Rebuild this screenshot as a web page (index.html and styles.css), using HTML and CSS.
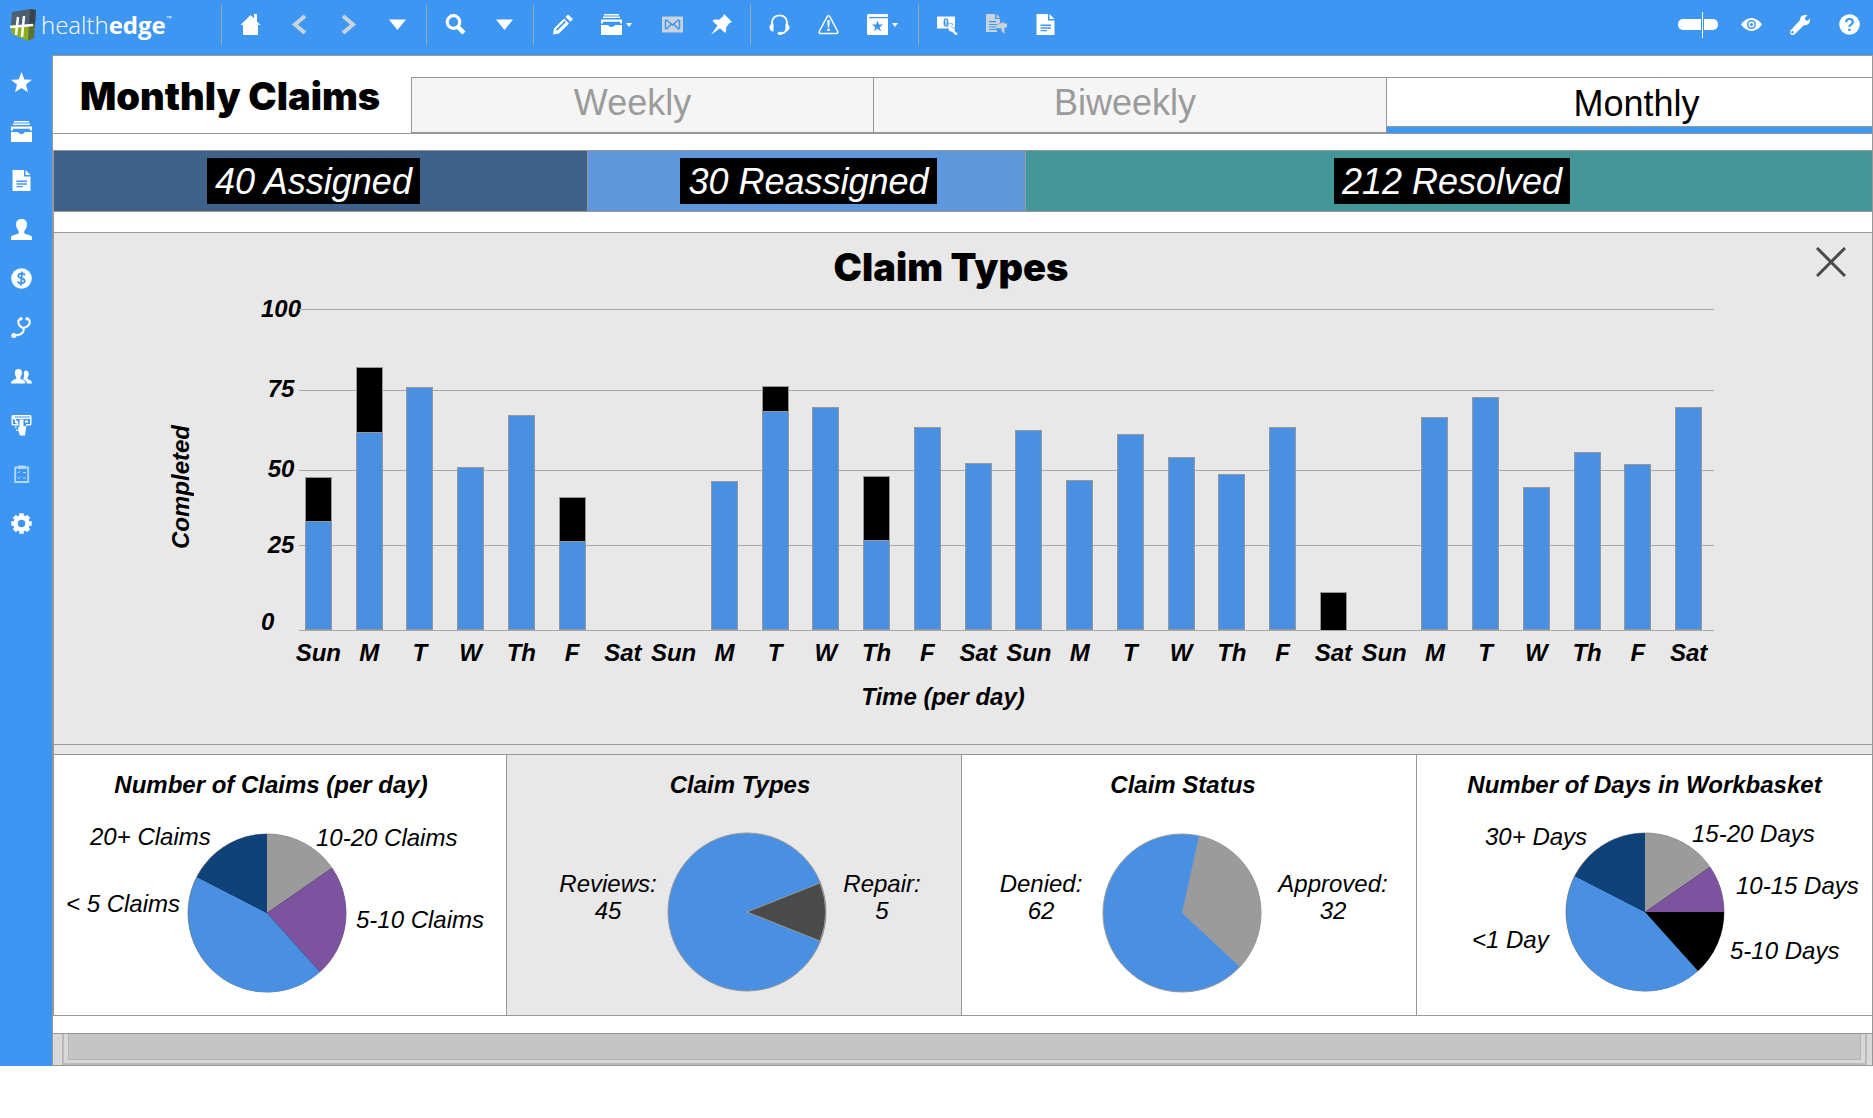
FILE: index.html
```html
<!DOCTYPE html>
<html lang="en">
<head>
    <meta charset="UTF-8">
    <meta name="viewport" content="width=device-width, initial-scale=1.0">
    <title>Monthly Claims</title>
    <link rel="stylesheet" href="styles.css">
</head>
<body>
    <!-- icons used in the toolbar and the sidebar -->
    <svg class="sprite" aria-hidden="true">
        <symbol id="home" viewBox="0 0 21 21"><path d="M10.500 1 14 4.500V0h3v7.500l3.500 3.500H18v10H3V11H.5z"/></symbol>
        <symbol id="left" viewBox="0 0 21 21"><path d="M16 2 6 10.500 16 19" fill="none" stroke="currentColor" stroke-width="4"/></symbol>
        <symbol id="right" viewBox="0 0 21 21"><path d="M5 2 15 10.500 5 19" fill="none" stroke="currentColor" stroke-width="4"/></symbol>
        <symbol id="down" viewBox="0 0 21 21"><path d="M2 5.500h17L10.500 16z"/></symbol>
        <symbol id="search" viewBox="0 0 21 21"><circle cx="8.500" cy="8" r="6.300" fill="none" stroke="currentColor" stroke-width="3.200"/><path d="m13 13 6 6" stroke="currentColor" stroke-width="4.500"/></symbol>
        <symbol id="pencil" viewBox="0 0 21 21"><path fill-rule="evenodd" d="M1 20.500 2 14.500 12 4.500l5 5-10 10zM12.500 7 4 15.500l1.200 1.200L14 8z"/><path d="m13.500 3 2.500-2.500 5 4.500-2.700 2.800z"/></symbol>
        <symbol id="tray" viewBox="0 0 21 21"><path d="M3 0h15v1.500H3zM2 2.500h17V4H2zM0 5.500h21v4h-2V7.800H2v1.700H0zM0 11h6.500c1 0 1.500 2 4 2s3-2 4-2H21v10H0z"/></symbol>
        <symbol id="mail" viewBox="0 0 21 21"><path d="M0 2.500h21v16H0z"/><path d="m4 5.500 6.500 5.500L17 5.500M4 15.500l5-5m8 5-5-5M3.500 6v9M17.500 6v9" fill="none" stroke="#3d96f2" stroke-width="1.500"/></symbol>
        <symbol id="pin" viewBox="0 0 21 21"><path d="m13 0 8 8-2.500 1-3.500 4.500c.5 2.500.2 4-1 5.500l-5-4.800L0 21l6.500-9.500L1.500 7C3 5.500 5 5.200 7.500 6L12 2.500z"/></symbol>
        <symbol id="headset" viewBox="0 0 21 21"><path d="M3 11V8.500C3 4.500 6 1.300 10.500 1.300S18 4.500 18 8.500V12q0 7-6 7.500" fill="none" stroke="currentColor" stroke-width="1.800"/><path d="M4.500 9.500v8C2 17.500.5 15.500.5 13.500s1.500-4 4-4zm12 0c2.500 0 4 2 4 4s-1.500 4-4 4z"/><ellipse cx="11" cy="19.300" rx="2.500" ry="1.600"/></symbol>
        <symbol id="alert" viewBox="0 0 21 21"><path d="M10.500 1.800Q11.500 1.800 12.500 3.800L19.500 17q1.200 2.500-1.200 2.500H2.700Q.3 19.500 1.500 17L8.500 3.800q1-2 2-2z" fill="none" stroke="currentColor" stroke-width="1.500"/><path d="M9.200 6h2.600l-.6 7.500H9.800zM9.300 14.700h2.400V17H9.300z"/></symbol>
        <symbol id="book" viewBox="0 0 21 21"><path fill-rule="evenodd" d="M1.500 0H21v3H2v1.200h19V21H1.500Q0 21 0 19.500V1.500Q0 0 1.500 0zm9 6.500L9 10.500H5l3.300 2.700L7 17.300l3.500-2.500 3.500 2.500-1.300-4.100L16 10.500h-4z"/></symbol>
        <symbol id="money" viewBox="0 0 21 21"><path d="M0 2.500h18v12H0z"/><ellipse cx="9" cy="8.500" rx="2.500" ry="4.300" fill="#3d96f2"/><path d="M9 5.500v6M8 7h2" stroke="currentColor"/><path d="M11 10.500q2-2.500 5-.500l-1.500 2.500 1 1.500 2.500-.5q.3 2-.500 2.800l3.500 3.500-2 2-3.700-3.900q-4.300.2-4.300-4.400z" stroke="#3d96f2" stroke-width=".600"/></symbol>
        <symbol id="docout" viewBox="0 0 21 21"><path fill-rule="evenodd" d="M0 0h9v5h5v4l-2 1H3v1h8v1.500H3v1h7V15H3v1h8v2H0zM3 7v1.200h7V7z"/><path d="M10.500 0 14 4h-3.500zM10 11l8-3v1.500h3v4h-2.500V20l-3-3v-2.500L10 14z"/></symbol>
        <symbol id="doc" viewBox="0 0 21 21"><path fill-rule="evenodd" d="M1.500 0H13v6.500h6.500V21h-18zM5.500 10.500V12h10.500v-1.500zm0 2.700v1.500h10.500v-1.500zm0 2.800v1.300H12V16z"/><path d="M14.500 0v5h5z"/></symbol>
        <symbol id="eye" viewBox="0 0 21 21"><path fill-rule="evenodd" d="M0 10.500Q4.500 4 10.500 4T21 10.500Q16.500 17 10.500 17T0 10.500zm10.500-4.500a4.500 4.500 0 1 0 0 9 4.500 4.500 0 0 0 0-9z"/><circle cx="10.500" cy="10.500" r="2.300" fill="none" stroke="currentColor" stroke-width="1.400"/></symbol>
        <symbol id="wrench" viewBox="0 0 21 21"><path fill-rule="evenodd" d="M10 6Q10 1 16 .8l1.500.4L14.800 4l.7 2.200 2.200.6L20 4.200q1 7-6.500 7.300L5 20q-2.500 1.800-4 .5T.5 16.500zM3 17.200a1.200 1.200 0 1 0 0 2 1.200 1.200 0 0 0 0-2z"/></symbol>
        <symbol id="help" viewBox="0 0 21 21"><circle cx="10.500" cy="10.500" r="10.300"/><path d="M7.200 8.200Q7.200 5 10.500 5t3.300 3q0 1.500-1.800 2.600T10.500 13" fill="none" stroke="#3d96f2" stroke-width="2.200"/><circle cx="10.500" cy="15.800" r="1.400" fill="#3d96f2"/></symbol>
        <symbol id="star" viewBox="0 0 21 21"><path d="m10.500 0 2.900 7.400 7.600.4-6 4.800 2 7.600-6.500-4.200L4 20.200l2-7.600-6-4.800 7.600-.4z"/></symbol>
        <symbol id="user" viewBox="0 0 21 21"><path d="M10.500 0C14 0 16 2 16 5.500q0 4-2.700 6.500v2.500l6 2q1.700.7 1.700 2V21H0v-2.500q0-1.300 1.700-2l6-2V12Q5 9.500 5 5.500 5 0 10.500 0z"/></symbol>
        <symbol id="dollar" viewBox="0 0 21 21"><circle cx="10.500" cy="10.500" r="10.300"/><path d="M14 7.200Q13.300 5.500 10.500 5.500T7.300 7.800q0 1.800 3.200 2.500t3.200 2.700-3.200 2.300-3.600-2M11.200 3.500 9.800 17.500" fill="none" stroke="#3d96f2" stroke-width="1.800"/></symbol>
        <symbol id="steth" viewBox="0 0 21 21"><path d="M9.500 2Q6 3 8 7.500q1.500 3 4.500 3.500 4.500-1 6-4.500Q19.500 3 16.500 1.800M12.500 11q1.500 7-9.500 7.500" fill="none" stroke="currentColor" stroke-width="2"/><circle cx="2.800" cy="18.500" r="2.500"/><circle cx="10" cy="1.800" r="1.700"/><circle cx="16" cy="1.800" r="1.700"/></symbol>
        <symbol id="users" viewBox="0 0 21 21"><path d="M14.800 4.500q3 .2 3 3.500 0 2.500-1.500 4 0 1.500 2.700 2.200 2 .6 2 3.300h-5q0-2.500-2.500-3.500L12.200 13q1.600-3 .6-6.500.500-2 2-2z"/><path d="M7.500 3Q11 3 11 7q0 2.500-1.700 4.500v1.200l3.500 1.600q1.700.8 1.700 3.200H0q0-2.400 1.700-3.200l3.600-1.500v-1.300Q3.800 9.500 3.800 7q0-4 3.700-4z"/></symbol>
        <symbol id="claim" viewBox="0 0 21 21"><path d="M2 .8h17q.8 0 .8.800V9q0 .8-.8.800h-4M7 9.800H2q-.8 0-.8-.8V1.600Q1.200.8 2 .8zM1 3.300h19" fill="none" stroke="currentColor" stroke-width="1.400"/><path d="M4 6h3v2H4zm10-.500h3v2h-3zM8.500 4.500h4v7l3-1-1 6-.5 4H9l-1.500-4-.5-4 1.500-1zM4 11.500h1.500V13H4zm1 3h1.500V16H5z"/></symbol>
        <symbol id="list" viewBox="0 0 21 21"><path d="M4.200 3.500h13v14.500h-13z" fill="none" stroke="currentColor" stroke-width="1.800"/><path d="M7 1.500h7.500V5H7z"/><path d="m6.500 8 1 1 1.500-2m3 1.500h3m-8.500 5 1 1L9 12.500m3 1.500h3" fill="none" stroke="currentColor"/></symbol>
        <symbol id="gear" viewBox="0 0 21 21"><circle cx="10.500" cy="10.500" r="6" fill="none" stroke="currentColor" stroke-width="4.500"/><path d="M10.500.3v20.400M.3 10.500h20.400M3.300 3.300l14.400 14.400M17.700 3.300 3.300 17.700" fill="none" stroke="currentColor" stroke-width="4.500" stroke-dasharray="3 14.400"/></symbol>
    </svg>

    <header class="topbar">
        <a class="brand" href="#">
            <svg class="logo" viewBox="0 0 26 32" aria-hidden="true">
                <path d="M2 3 20 0l6 1-1 14-24 1z" fill="#4d5f70"/>
                <path d="M20 0 26 1 25 15h-6z" fill="#38444f"/>
                <path d="M1 16h18l-1 16L2 25z" fill="#8fae1b"/>
                <path d="M19 15h6l-1 14-6 3z" fill="#5d7230"/>
                <path d="M8 8 6 26M14 7l-2 21M0 18l23-2" fill="none" stroke="#fff" stroke-width="2.500"/>
            </svg>
            <span class="name">health<b>edge</b></span><small>™</small>
        </a>
        <span class="sep"></span>
        <button class="icon" aria-label="Home"><svg><use href="#home"/></svg></button>
        <button class="icon muted" aria-label="Back"><svg><use href="#left"/></svg></button>
        <button class="icon muted" aria-label="Forward"><svg><use href="#right"/></svg></button>
        <button class="icon" aria-label="History"><svg><use href="#down"/></svg></button>
        <span class="sep"></span>
        <button class="icon" aria-label="Search"><svg><use href="#search"/></svg></button>
        <button class="icon" aria-label="Search options"><svg><use href="#down"/></svg></button>
        <span class="sep"></span>
        <button class="icon" aria-label="Edit"><svg><use href="#pencil"/></svg></button>
        <button class="icon with-caret" aria-label="Workbasket"><svg><use href="#tray"/></svg><i class="caret"></i></button>
        <button class="icon muted" aria-label="Mail"><svg><use href="#mail"/></svg></button>
        <button class="icon" aria-label="Pin"><svg><use href="#pin"/></svg></button>
        <span class="sep"></span>
        <button class="icon" aria-label="Support"><svg><use href="#headset"/></svg></button>
        <button class="icon" aria-label="Alerts"><svg><use href="#alert"/></svg></button>
        <button class="icon with-caret" aria-label="Bookmarks"><svg><use href="#book"/></svg><i class="caret"></i></button>
        <span class="sep"></span>
        <button class="icon" aria-label="Payment repair"><svg><use href="#money"/></svg></button>
        <button class="icon muted" aria-label="Send document"><svg><use href="#docout"/></svg></button>
        <button class="icon" aria-label="Document"><svg><use href="#doc"/></svg></button>
        <div class="right-tools">
            <input type="range" class="zoom" aria-label="Zoom" min="0" max="100" value="62">
            <button class="icon" aria-label="View"><svg><use href="#eye"/></svg></button>
            <button class="icon" aria-label="Tools"><svg><use href="#wrench"/></svg></button>
            <button class="icon" aria-label="Help"><svg><use href="#help"/></svg></button>
        </div>
    </header>

    <div class="wrapper">
        <nav class="sidebar">
            <button class="icon" aria-label="Favorites"><svg><use href="#star"/></svg></button>
            <button class="icon" aria-label="Workbasket"><svg><use href="#tray"/></svg></button>
            <button class="icon" aria-label="Documents"><svg><use href="#doc"/></svg></button>
            <button class="icon" aria-label="Member"><svg><use href="#user"/></svg></button>
            <button class="icon" aria-label="Billing"><svg><use href="#dollar"/></svg></button>
            <button class="icon" aria-label="Providers"><svg><use href="#steth"/></svg></button>
            <button class="icon" aria-label="Groups"><svg><use href="#users"/></svg></button>
            <button class="icon" aria-label="Claims"><svg><use href="#claim"/></svg></button>
            <button class="icon soft" aria-label="Tasks"><svg><use href="#list"/></svg></button>
            <button class="icon" aria-label="Settings"><svg><use href="#gear"/></svg></button>
        </nav>

        <main>
            <div class="heading">
                <h1>Monthly Claims</h1>
                <div class="tabs" role="tablist">
                    <button class="tab weekly" role="tab">Weekly</button>
                    <button class="tab biweekly" role="tab">Biweekly</button>
                    <button class="tab monthly active" role="tab" aria-selected="true">Monthly</button>
                </div>
            </div>

            <div class="content">
                <div class="status">
                    <div class="assigned"><span>40 Assigned</span></div>
                    <div class="reassigned"><span>30 Reassigned</span></div>
                    <div class="resolved"><span>212 Resolved</span></div>
                </div>

                <section class="panel">
                    <div class="panel-title">
                        <h2>Claim Types</h2>
                        <button class="close" aria-label="Close">
                            <svg viewBox="0 0 30 30"><path d="M1 1 29 29M29 1 1 29"/></svg>
                        </button>
                    </div>
                    <div class="chart">
                        <p class="y-title">Completed</p>
                        <ul class="y-axis">
                            <li>100</li>
                            <li>75</li>
                            <li>50</li>
                            <li>25</li>
                            <li>0</li>
                        </ul>
                        <div class="plot">
                            <div class="lines"><div></div><div></div><div></div><div></div></div>
                            <div class="bars" id="bars"></div>
                            <div class="days" id="days"></div>
                        </div>
                    </div>
                    <p class="x-title">Time (per day)</p>
                </section>

                <section class="cards">
                    <article class="card per-day">
                        <h3>Number of Claims (per day)</h3>
                        <svg class="pie" viewBox="0 0 452 180">
                            <g transform="translate(213 93)">
                                <circle r="79" class="ring"/>
                                <path class="gray" d="M0 0V-79A79 79 0 0 1 65-45z"/>
                                <path class="purple" d="M0 0 65-45A79 79 0 0 1 53 59z"/>
                                <path class="blue" d="M0 0 53 59A79 79 0 0 1-70-36z"/>
                                <path class="navy" d="M0 0-70-36A79 79 0 0 1 0-79z"/>
                            </g>
                            <text x="36" y="25">20+ Claims</text>
                            <text x="262" y="26">10-20 Claims</text>
                            <text x="12" y="92">&lt; 5 Claims</text>
                            <text x="302" y="108">5-10 Claims</text>
                        </svg>
                    </article>
                    <article class="card types">
                        <h3>Claim Types</h3>
                        <svg class="pie" viewBox="0 0 452 180">
                            <g transform="translate(239 92)">
                                <circle r="79" class="ring blue"/>
                                <path class="dark" d="M0 0 73-29A79 79 0 0 1 73 29z"/>
                            </g>
                            <g text-anchor="middle">
                                <text x="100" y="72">Reviews:</text>
                                <text x="100" y="99">45</text>
                                <text x="374" y="72">Repair:</text>
                                <text x="374" y="99">5</text>
                            </g>
                        </svg>
                    </article>
                    <article class="card claim-status">
                        <h3>Claim Status</h3>
                        <svg class="pie" viewBox="0 0 452 180">
                            <g transform="translate(219 93)">
                                <circle r="79" class="ring blue"/>
                                <path class="gray" d="M0 0 17-77A79 79 0 0 1 58 54z"/>
                            </g>
                            <g text-anchor="middle">
                                <text x="78" y="72">Denied:</text>
                                <text x="78" y="99">62</text>
                                <text x="370" y="72">Approved:</text>
                                <text x="370" y="99">32</text>
                            </g>
                        </svg>
                    </article>
                    <article class="card">
                        <h3>Number of Days in Workbasket</h3>
                        <svg class="pie" viewBox="0 0 452 180">
                            <g transform="translate(226 92)">
                                <circle r="79" class="ring"/>
                                <path class="gray" d="M0 0V-79A79 79 0 0 1 65-45z"/>
                                <path class="purple" d="M0 0 65-45A79 79 0 0 1 79 0z"/>
                                <path class="black" d="M0 0H79A79 79 0 0 1 53 59z"/>
                                <path class="blue" d="M0 0 53 59A79 79 0 0 1-70-36z"/>
                                <path class="navy" d="M0 0-70-36A79 79 0 0 1 0-79z"/>
                            </g>
                            <text x="66" y="25">30+ Days</text>
                            <text x="273" y="22">15-20 Days</text>
                            <text x="317" y="74">10-15 Days</text>
                            <text x="53" y="128">&lt;1 Day</text>
                            <text x="311" y="139">5-10 Days</text>
                        </svg>
                    </article>
                </section>
            </div>

            <div class="scroll">
                <div class="track"><div class="thumb"></div></div>
            </div>
        </main>
    </div>

    <script>
        // [day, reviews, repairs] as bar heights in px
        const claims = [
            ['Sun', 109, 44], ['M', 198, 65], ['T', 243, 0], ['W', 163, 0], ['Th', 215, 0], ['F', 89, 44], ['Sat', 0, 0],
            ['Sun', 0, 0], ['M', 149, 0], ['T', 219, 25], ['W', 223, 0], ['Th', 90, 64], ['F', 203, 0], ['Sat', 167, 0],
            ['Sun', 200, 0], ['M', 150, 0], ['T', 196, 0], ['W', 173, 0], ['Th', 156, 0], ['F', 203, 0], ['Sat', 0, 38],
            ['Sun', 0, 0], ['M', 213, 0], ['T', 233, 0], ['W', 143, 0], ['Th', 178, 0], ['F', 166, 0], ['Sat', 223, 0]
        ];
        const bars = document.getElementById('bars');
        const days = document.getElementById('days');

        function addSegment(column, name, height){
            if(height === 0) return;
            const segment = document.createElement('div');
            segment.className = name;
            segment.style.height = height + 'px';
            column.appendChild(segment);
        }

        claims.forEach(([day, reviews, repairs]) => {
            const column = document.createElement('div');
            column.className = 'bar';
            addSegment(column, 'repairs', repairs);
            addSegment(column, 'reviews', reviews);
            bars.appendChild(column);

            const label = document.createElement('span');
            label.textContent = day;
            days.appendChild(label);
        });
    </script>
</body>
</html>
```
FILE: styles.css
```css
*,
*::before,
*::after{
    padding: 0;
    margin: 0;
    box-sizing: border-box;
}
body{
    background-color: #ffffff;
    color: #000000;
    font-family: "Liberation Sans", Arial, sans-serif;
    font-size: 24px;
}
button{
    border: none;
    background: none;
    font-family: inherit;
    cursor: pointer;
}
.sprite{
    display: none;
}

/* top bar */
.topbar{
    display: flex;
    align-items: center;
    height: 55px;
    padding-bottom: 6px;
    background-color: #3d96f2;
    color: #ffffff;
}
.brand{
    display: flex;
    align-items: center;
    width: 217px;
    padding-left: 10px;
    color: #ffffff;
    text-decoration: none;
}
.logo{
    width: 26px;
    height: 32px;
    margin-right: 5px;
}
.name{
    font-family: "Open Sans", sans-serif;
    font-size: 24px;
    font-weight: 300;
    line-height: 32px;
}
.name b{
    font-weight: 700;
}
.brand small{
    align-self: flex-start;
    padding-top: 6px;
    font-size: 6px;
}
.sep{
    width: 1px;
    height: 41px;
    margin: 0 4px;
    background-color: #9aa5ad;
}
.icon{
    display: flex;
    align-items: center;
    justify-content: center;
    width: 49px;
    height: 49px;
    color: #ffffff;
}
.icon svg{
    width: 21px;
    height: 21px;
    fill: currentColor;
}
.icon.muted{
    color: #c8d3dc;
}
.icon.soft{
    color: #b5d8f8;
}
.icon.with-caret{
    justify-content: flex-start;
    gap: 4px;
    width: 61px;
    padding-left: 14px;
}
.caret{
    border: 3px solid transparent;
    border-top: 4px solid #ffffff;
    border-bottom: none;
}
.right-tools{
    display: flex;
    align-items: center;
    margin-left: auto;
}
.right-tools .icon:last-child{
    width: 48px;
}
.zoom{
    appearance: none;
    width: 40px;
    height: 26px;
    margin-right: 9px;
    background: none;
}
.zoom::-webkit-slider-runnable-track{
    height: 11px;
    border-radius: 5px;
    background-color: #ffffff;
}
.zoom::-webkit-slider-thumb{
    appearance: none;
    width: 3px;
    height: 26px;
    margin-top: -7px;
    border: solid #3d96f2;
    border-width: 0 1px;
    background-color: #ffffff;
}

/* layout */
.wrapper{
    display: flex;
}
.sidebar{
    width: 52px;
    padding-top: 3px;
    background-color: #3d96f2;
}
.sidebar .icon{
    width: 42px;
}
main{
    flex: 1;
    min-width: 0;
    border: 1px solid #979797;
}
.heading{
    display: flex;
    height: 78px;
    border-bottom: 1px solid #979797;
}
h1,
h2{
    font-family: "Arial Black", Inter, sans-serif;
    font-size: 38px;
    font-weight: 900;
    line-height: 44px;
}
h1{
    width: 358px;
    padding: 18px 0 0 27px;
    white-space: nowrap;
}
.tabs{
    display: grid;
    flex: 1;
    grid-template-columns: 462fr 513fr 486fr;
    margin-top: 21px;
}
.tab{
    padding-bottom: 4px;
    border: 1px solid #979797;
    border-right: none;
    background-color: #f5f5f5;
    color: #9b9b9b;
    font-size: 36px;
    line-height: 48px;
}
.weekly{
    padding-right: 20px;
}
.biweekly{
    padding-right: 10px;
}
.monthly{
    padding-left: 14px;
}
.tab.active{
    border-bottom: none;
    background-color: #ffffff;
    color: #000000;
    box-shadow: inset 0 -6px #3d96f2, inset 0 -7px #979797;
}
.content{
    border-left: 1px solid #979797;
}

/* status bar */
.status{
    display: grid;
    grid-template-columns: 533fr 438fr 847fr;
    margin: 16px 0 20px;
    border-top: 1px solid #979797;
    border-bottom: 1px solid #979797;
}
.status div{
    display: flex;
    justify-content: center;
    padding: 7px 0;
}
.status div + div{
    border-left: 1px solid #979797;
}
.status span{
    padding: 2px 8px 0;
    background-color: #000000;
    color: #ffffff;
    font-size: 36px;
    font-style: italic;
    line-height: 44px;
}
.status .assigned{
    padding-right: 14px;
    background-color: #3f628b;
}
.status .reassigned{
    padding-left: 4px;
    background-color: #5e97dc;
}
.status .resolved{
    padding-left: 6px;
    background-color: #449798;
}

/* claim types chart */
.panel{
    padding: 12px 26px 33px 32px;
    border-top: 1px solid #979797;
    border-bottom: 1px solid #979797;
    background-color: #e8e8e8;
}
.panel-title{
    display: flex;
    align-items: flex-start;
}
h2{
    flex: 1;
    text-align: center;
}
.close{
    width: 30px;
    height: 30px;
    margin-top: 2px;
}
.close svg{
    display: block;
    fill: none;
    stroke: #4a4a4a;
    stroke-width: 3px;
}
.chart,
.x-title{
    font-weight: bold;
    font-style: italic;
    line-height: 28px;
}
.chart{
    display: flex;
    align-items: flex-start;
    margin: 6px 132px 0 81px;
}
.y-title{
    align-self: center;
    margin-top: 12px;
    writing-mode: vertical-rl;
    transform: rotate(180deg);
}
.y-axis{
    display: grid;
    grid-template-rows: 80px 80px 76px 77px 28px;
    width: 27px;
    margin: 0 5px 0 66px;
    list-style: none;
}
.y-axis li{
    display: flex;
    justify-content: center;
}
.y-axis li:last-child{
    justify-content: flex-start;
}
.plot{
    position: relative;
    flex: 1;
    padding-top: 14px;
}
.lines{
    position: absolute;
    top: 14px;
    left: 6px;
    right: 0;
    display: grid;
    grid-template-rows: 81px 80px 75px 86px;
}
.lines div{
    border-top: 1px solid #a8a8a8;
}
.lines div:last-child{
    border-bottom: 1px solid #a8a8a8;
}
.bars,
.days{
    position: relative;
    display: grid;
    grid-template-columns: repeat(28, 1fr);
}
.bars{
    height: 322px;
    padding-bottom: 1px;
}
.bar{
    display: flex;
    flex-direction: column;
    justify-content: flex-end;
    align-items: center;
}
.bar div{
    width: 27px;
    border: 1px solid #979797;
}
.reviews{
    background-color: #4a90e2;
}
.bar .repairs{
    border-bottom: none;
    background-color: #000000;
}
.days{
    margin-top: 8px;
}
.days span{
    display: flex;
    justify-content: center;
}
.x-title{
    padding-right: 46px;
    margin-top: 16px;
    text-align: center;
}

/* pie charts */
.cards{
    display: grid;
    grid-template-columns: 453fr 455fr 455fr 455fr;
    border-top: 9px solid #e8e8e8;
    border-bottom: 1px solid #979797;
}
.card{
    padding: 16px 0 15px;
    border-top: 1px solid #979797;
    border-right: 1px solid #979797;
}
.card:last-child{
    border-right: none;
}
.card.types{
    background-color: #e8e8e8;
}
h3{
    margin-bottom: 21px;
    font-size: 24px;
    font-style: italic;
    line-height: 28px;
    text-align: center;
}
.per-day h3{
    padding-right: 18px;
}
.types h3{
    padding-left: 12px;
}
.claim-status h3{
    padding-right: 12px;
}
.pie{
    display: block;
    width: 452px;
    max-width: 100%;
    margin: 0 auto;
    font-style: italic;
}
.ring{
    stroke: #979797;
    stroke-width: 1px;
}
.gray{
    fill: #9b9b9b;
}
.purple{
    fill: #7d539f;
}
.blue{
    fill: #4a90e2;
}
.navy{
    fill: #10427a;
}
.black{
    fill: #000000;
}
.dark{
    fill: #4a4a4a;
    stroke: #979797;
}

/* scrollbar */
.scroll{
    margin-top: 17px;
    padding: 0 5px 0 9px;
    border-top: 1px solid #979797;
    background-color: #d8d8d8;
}
.track{
    padding: 0 4px 3px;
    border: 2px solid #b9b9b9;
    border-top: none;
}
.thumb{
    height: 26px;
    border: 1px solid #b4b4b4;
    border-top: none;
    background-color: #c5c5c5;
}
```
